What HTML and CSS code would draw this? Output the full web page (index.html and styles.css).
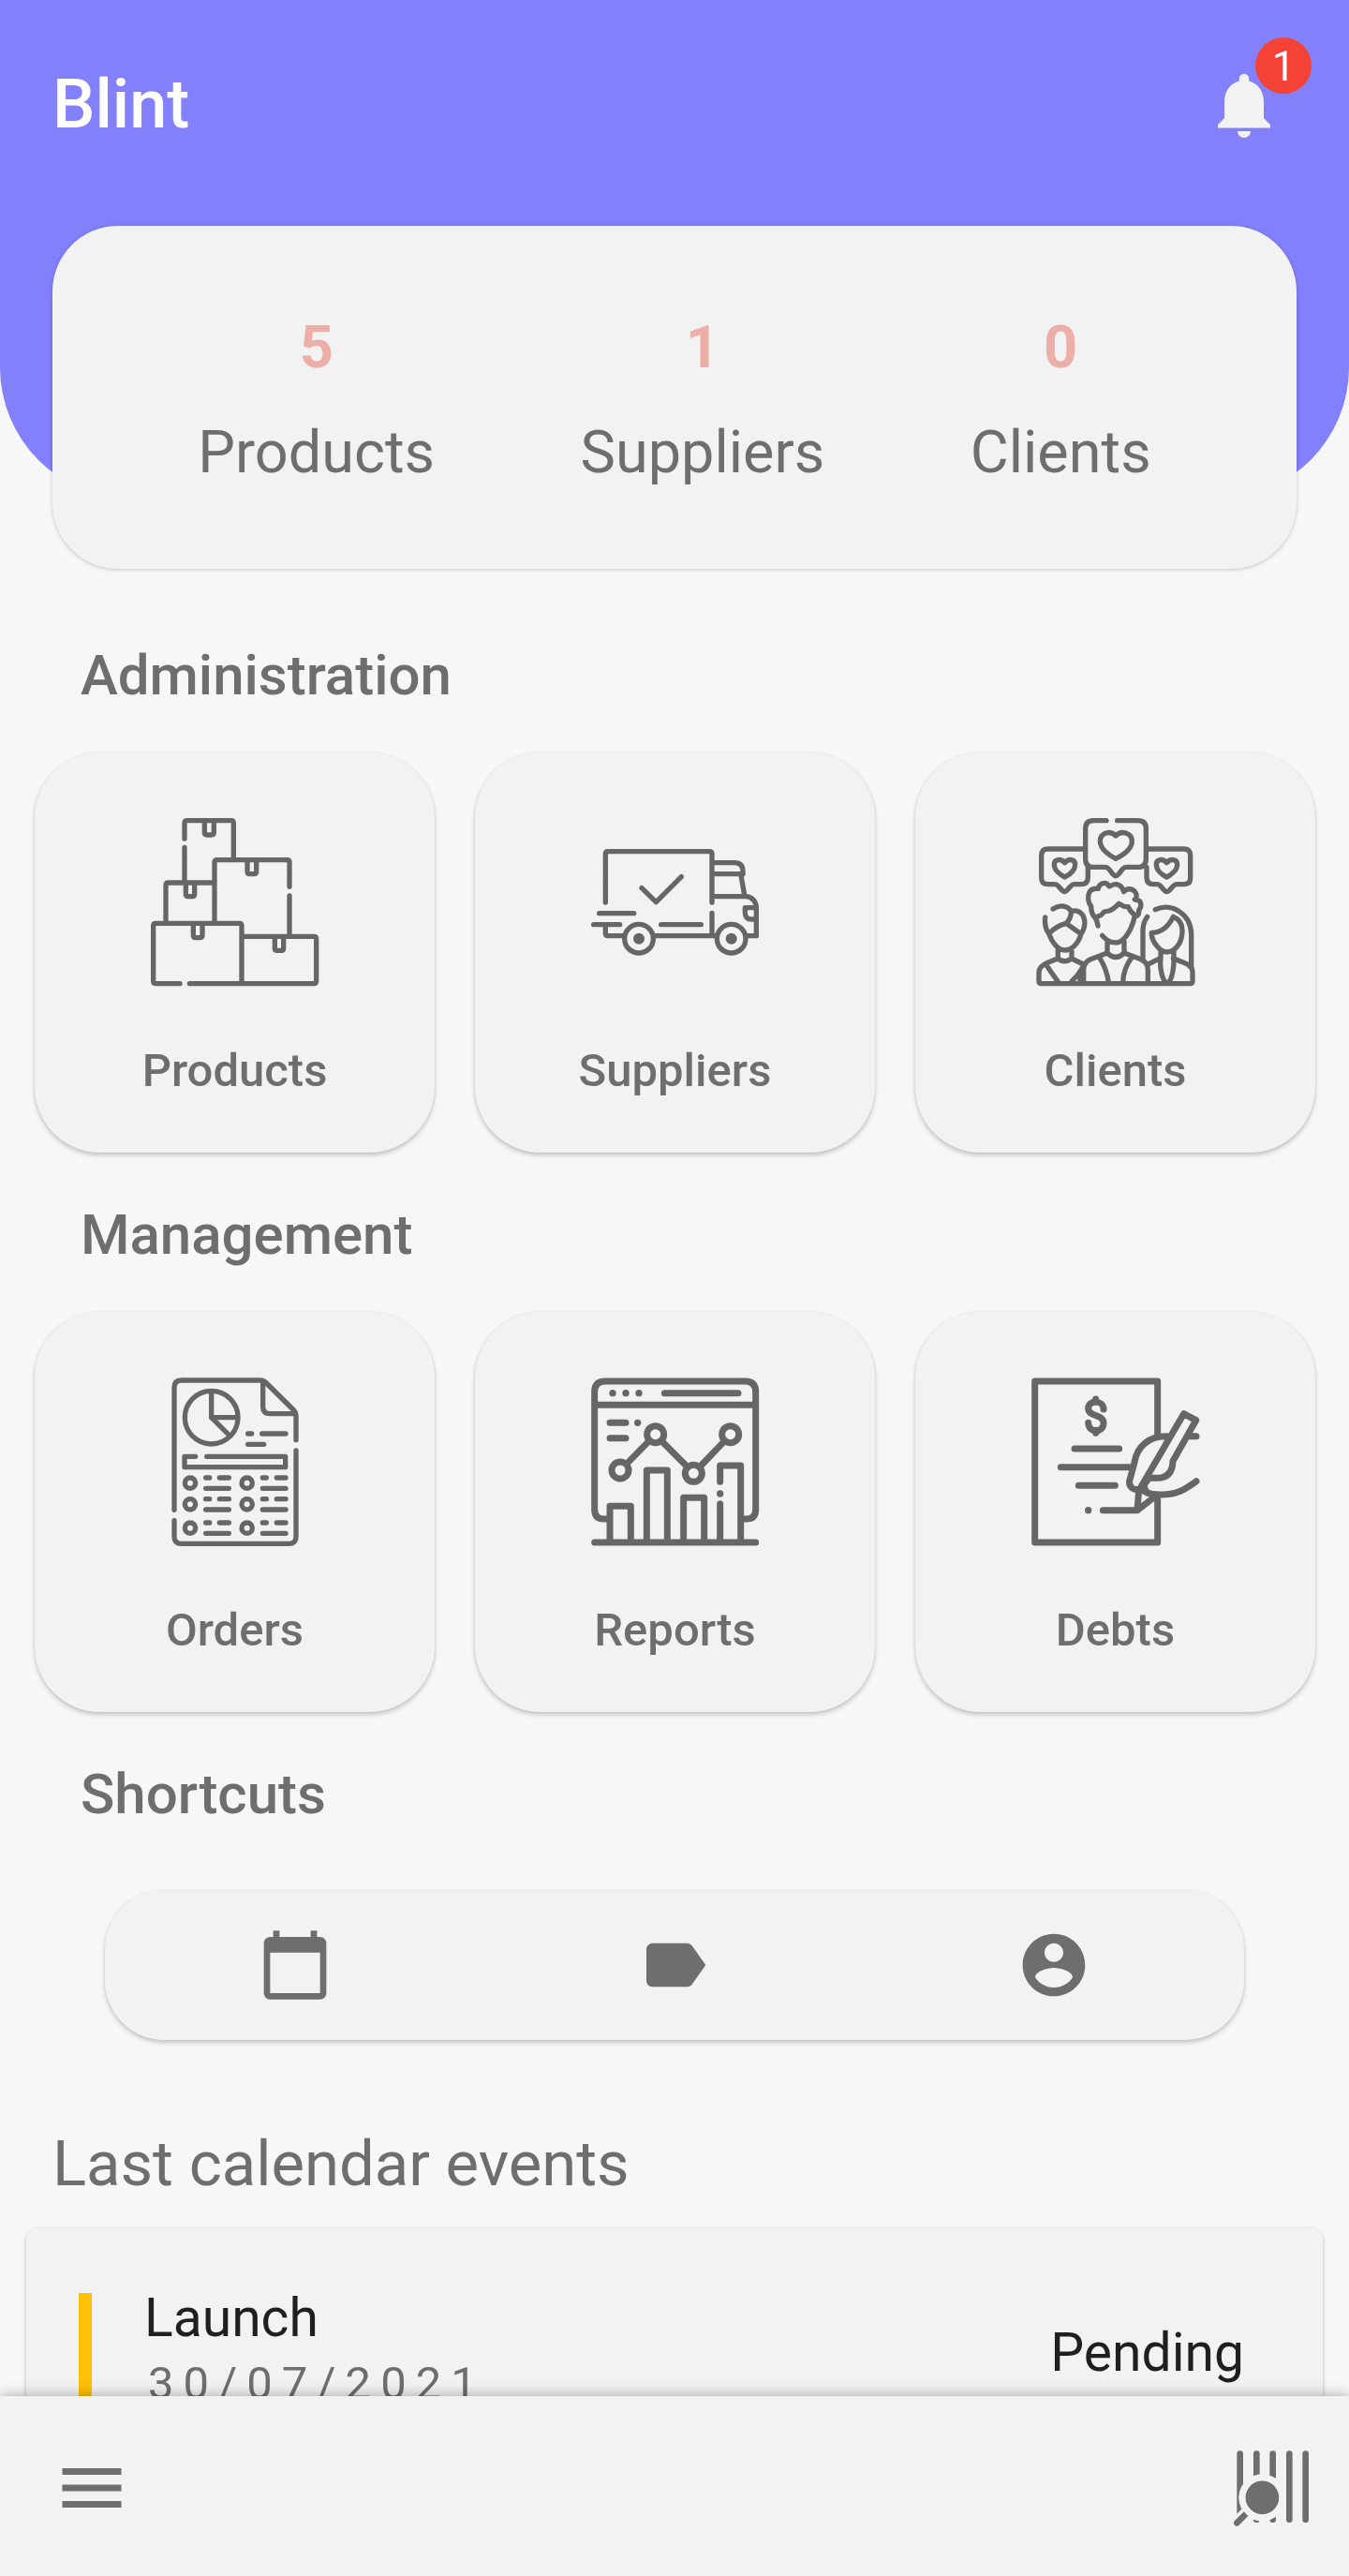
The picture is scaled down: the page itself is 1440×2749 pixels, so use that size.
FILE: index.html
```html
<!DOCTYPE html>
<html lang="en">
<head>
<meta charset="utf-8">
<meta name="viewport" content="width=device-width, initial-scale=1">
<title>Blint</title>
<link rel="stylesheet" href="styles.css">
</head>
<body>
<div class="app">
  <main class="content">
    <header class="hero">
      <div class="topbar">
        <h1 class="brand">Blint</h1>
        <button class="icon-button bell" type="button" aria-label="Notifications">
          <svg class="bell-icon" viewBox="0 0 24 24" aria-hidden="true"><path d="M12 22c1.100 0 2-.9 2-2h-4c0 1.100.89 2 2 2zm6-6v-5c0-3.070-1.640-5.640-4.500-6.320V4c0-.83-.67-1.500-1.500-1.500s-1.500.67-1.500 1.500v.68C7.630 5.360 6 7.920 6 11v5l-2 2v1h16v-1l-2-2z"/></svg>
          <span class="badge">1</span>
        </button>
      </div>
    </header>

    <dl class="summary">
      <div class="stat"><dt>Products</dt><dd>5</dd></div>
      <div class="stat"><dt>Suppliers</dt><dd>1</dd></div>
      <div class="stat"><dt>Clients</dt><dd>0</dd></div>
    </dl>

    <section class="section">
      <h2 class="heading">Administration</h2>
      <nav class="tiles" aria-label="Administration">
        <a class="tile" href="#products">
          <svg class="tile-icon" viewBox="60 68 540 540" aria-hidden="true">
            <path d="M168 134V84q0-8 8-8h141q8 0 8 8v115M168 162v110M232 80v34q0 8 8 8h14q8 0 8-8V80M264 398V210q0-8 8-8h224q8 0 8 8v78M504 317v128M369 206v34q0 7 7 7h15q7 0 7-7v-34M108 400V283q0-8 8-8h148M172 279v33q0 7 7 7h14q7 0 7-7v-33M153 598H76q-8 0-8-8V413q0-8 8-8h268q7 0 7 8v185M184 598h398q8 0 8-8V455q0-8-8-8H355M196 409v34q0 8 7 8h14q8 0 8-8v-34M457 451v34q0 7 7 7h14q7 0 7-7v-34"/>
          </svg>
          <span>Products</span>
        </a>
        <a class="tile" href="#suppliers">
          <svg class="tile-icon" viewBox="60 68 540 540" aria-hidden="true">
            <path d="M106 338V183q0-8 8-8h325q8 0 8 8v155M447 372v72M222 292l46 45 81-81M86 373h111M68 409h84M284 409h128M106 412v25q0 8 8 8h52M264 445h197M447 211h73q26 0 26 28v8h-98M540 252l12 67M447 319h108c22 0 34 18 34 36v90h-30M589 355h-36v15q0 22 21 22h15"/>
            <circle cx="213" cy="454" r="46"/><circle cx="509" cy="454" r="46"/>
            <circle class="dot" cx="213" cy="454" r="18"/><circle class="dot" cx="509" cy="454" r="18"/>
          </svg>
          <span>Suppliers</span>
        </a>
        <a class="tile" href="#clients">
          <svg class="tile-icon" viewBox="60 68 540 540" aria-hidden="true">
            <path d="M300 76h-41q-26 0-26 26v97q0 26 26 26h37q7 0 12 6l14 18q8 9 16 0l14-18q5-6 12-6h37q26 0 26-26v-97q0-26-26-26h-66"/>
            <path d="M330 198C314 190 280 169 280 142C280 116 313 105 330 125C347 105 382 116 382 142C382 169 346 190 330 198Z"/>
            <path d="M231 167H113q-21 0-21 21v71q0 21 21 21h22q6 0 11 6l13 14q7 8 14 0l13-14q5-6 11-6h22q22 0 22-22v-32M429 167h119q21 0 21 21v71q0 21-21 21h-23q-6 0-11 6l-13 14q-8 8-15 0l-12-14q-5-6-11-6h-12q-22 0-22-22v-32"/>
            <path d="M167 257C153 250 133 235 133 217C133 198 155 197 167 211C178 197 200 198 200 217C200 235 180 250 167 257ZM493 257C479 250 460 235 460 217C460 198 482 197 493 211C505 197 527 198 527 217C527 235 507 250 493 257Z"/>
            <path d="M273 413C271 404 270 397 265 388C252 377 251 363 251 350C240 337 240 318 245 307C250 294 262 293 274 294C276 280 292 272 303 279Q309 291 315 284C334 274 351 284 356 304C363 293 382 292 391 303C399 313 398 324 391 329C416 329 413 353 404 363C406 380 394 387 389 376Q378 370 370 352L357 351 340 342Q323 360 308 365L293 368Q283 382 268 384"/>
            <path d="M287 444C302 462 316 467 330 467C350 467 378 440 391 382M303 464v37M357 464v37M303 500Q330 526 357 500M303 500l-54 20q-22 9-22 34v43M357 500l54 20q22 9 22 34v43M277 513Q301 550 307 594M382 513Q354 550 353 594"/>
            <path d="M104 386C102 407 106 426 116 438C125 465 144 491 167 491C190 491 212 467 219 438C231 424 236 393 222 376C213 365 198 362 187 367C177 348 151 344 129 359M187 367Q188 388 171 405Q141 413 118 436M171 405l48 34M145 491v27M189 491v27M144 518Q166 534 189 518M144 518l-32 13q-28 12-28 31v28q0 8 8 8h476q8 0 8-8v-29q0-19-28-30l-34-14M189 518l37 18M106 536q18 27 39 56M224 546q-14 26-35 45M216 570v24"/>
            <path d="M431 384Q417 402 417 429v95M457 361C510 336 572 377 572 441v101M514 384Q490 434 445 435C443 459 470 497 493 497C520 497 542 468 543 432Q545 397 514 384ZM474 494v22l-38 19M516 494v22M474 516C470 545 478 582 490 594M516 516C517 548 510 582 500 594"/>
          </svg>
          <span>Clients</span>
        </a>
      </nav>
    </section>

    <section class="section">
      <h2 class="heading">Management</h2>
      <nav class="tiles" aria-label="Management">
        <a class="tile" href="#orders">
          <svg class="tile-icon" viewBox="0 58 540 540" aria-hidden="true">
            <path d="M75 482V90q0-23 23-23h254q9 0 15 6l91 90q7 7 7 16v79M465 292v275q0 23-23 23H98q-23 0-23-23v-51M359 72v80q0 22 22 22h80"/>
            <circle cx="194" cy="186" r="85"/>
            <path d="M194 103v83h84M194 186l57 57M311 238h12M356 238h76M311 272h51M143 311h-35v34h323v-34H179"/>
            <g id="order-row">
              <circle cx="126" cy="396" r="17"/><circle cx="308" cy="396" r="17"/>
              <path d="M176 379h12M220 379h30M176 413h74M358 379h12M403 379h29M358 413h74"/>
            </g>
            <use href="#order-row" y="68"/>
            <use href="#order-row" y="144"/>
          </svg>
          <span>Orders</span>
        </a>
        <a class="tile" href="#reports">
          <svg class="tile-icon bold" viewBox="60 58 540 540" aria-hidden="true">
            <path d="M116 511h-14q-31 0-31-31V104q0-34 34-34h448q34 0 34 34v376q0 31-31 31h-14M76 146h506M295 108h236M120 203h51M120 252h51M71 586h516M120 582V470h67v112M238 582V355h66v227M356 582V443h66v139M473 392v-52h66v242M473 462v120M179 329l61-62M290 266l74 74M412 340l70-73"/>
            <circle cx="153" cy="355" r="27"/><circle cx="266" cy="240" r="27"/><circle cx="388" cy="365" r="27"/><circle cx="506" cy="240" r="27"/>
            <circle class="dot" cx="129" cy="108" r="11"/><circle class="dot" cx="171" cy="108" r="11"/><circle class="dot" cx="213" cy="108" r="11"/><circle class="dot" cx="209" cy="203" r="11"/><circle class="dot" cx="473" cy="430" r="11"/>
          </svg>
          <span>Reports</span>
        </a>
        <a class="tile" href="#debts">
          <svg class="tile-icon bold" viewBox="60 58 540 540" aria-hidden="true">
            <path d="M464 242V70H71v516h393V440M266 127v10M266 227v9M291 160C291 128 242 130 242 157C242 186 291 173 291 204C291 237 242 237 242 203M198 286h143M154 345h224M211 404h117M289 483h110l54-42M399 483l5-64"/>
            <path d="M500 247C439 242 398 279 390 330L374 389C371 411 390 420 407 415L548 174 587 195 513 326M567 246h21M513 326Q511 381 460 380H441M410 414C433 434 460 434 492 432C533 430 563 409 588 390M431 388Q411 405 432 428"/>
            <circle class="dot" cx="242" cy="483" r="11"/>
          </svg>
          <span>Debts</span>
        </a>
      </nav>
    </section>

    <section class="section">
      <h2 class="heading">Shortcuts</h2>
      <nav class="shortcuts" aria-label="Shortcuts">
        <a href="#calendar" aria-label="Calendar"><svg class="shortcut-icon" viewBox="0 0 24 24" aria-hidden="true"><path d="M20 3h-1V1h-2v2H7V1H5v2H4c-1.100 0-2 .9-2 2v16c0 1.100.9 2 2 2h16c1.100 0 2-.9 2-2V5c0-1.100-.9-2-2-2zm0 18H4V8h16v13z"/></svg></a>
        <a href="#labels" aria-label="Labels"><svg class="shortcut-icon" viewBox="0 0 24 24" aria-hidden="true"><path d="M17.630 5.840C17.270 5.330 16.670 5 16 5L5 5.010C3.900 5.010 3 5.900 3 7v10c0 1.100.9 1.990 2 1.990L16 19c.67 0 1.270-.33 1.630-.84L22 12l-4.370-6.160z"/></svg></a>
        <a href="#account" aria-label="Account"><svg class="shortcut-icon" viewBox="0 0 24 24" aria-hidden="true"><path d="M12 2C6.480 2 2 6.480 2 12s4.480 10 10 10 10-4.480 10-10S17.520 2 12 2zm0 3c1.660 0 3 1.340 3 3s-1.340 3-3 3-3-1.340-3-3 1.340-3 3-3zm0 14.200c-2.500 0-4.710-1.280-6-3.220.03-1.990 4-3.080 6-3.080 1.990 0 5.970 1.090 6 3.080-1.290 1.940-3.500 3.220-6 3.220z"/></svg></a>
      </nav>
    </section>

    <section class="events">
      <h2 class="events-heading">Last calendar events</h2>
      <article class="event">
        <div class="event-info">
          <h3 class="event-title">Launch</h3>
          <time class="event-date" datetime="2021-07-30">30/07/2021</time>
        </div>
        <span class="event-status">Pending</span>
      </article>
    </section>
  </main>

  <footer class="bottombar">
    <button class="icon-button" type="button" aria-label="Menu">
      <svg class="menu-icon" viewBox="0 0 24 24" aria-hidden="true"><path d="M3 18h18v-2H3v2zm0-5h18v-2H3v2zm0-7v2h18V6H3z"/></svg>
    </button>
    <button class="icon-button" type="button" aria-label="Scan barcode">
      <svg class="scan-icon" viewBox="168 160 243 249" aria-hidden="true">
        <path class="bars" d="M188 174v200M241 174v210M293 174v210M346 174v210M398 174v210"/>
        <path class="cutout" d="M240 334l-66 66"/>
        <circle class="halo" cx="259" cy="314" r="75"/>
        <circle cx="259" cy="314" r="54"/>
        <path class="bars" d="M206 367l-28 28"/>
        <path class="cutout ring" d="M259 250a64 64 0 1 0 1 0"/>
      </svg>
    </button>
  </footer>
</div>
</body>
</html>
```
FILE: styles.css
```css
:root {
  --accent: #8280fb;
  --surface: #f2f2f2;
  --page: #f7f7f7;
  --muted: #6e6e6e;
  --ink: #1f1f1f;
  --shadow: 0 3px 5px rgba(0, 0, 0, 0.2), 0 0 3px rgba(0, 0, 0, 0.07);
}

* {
  box-sizing: border-box;
}

body {
  margin: 0;
  background: var(--page);
  color: var(--muted);
  font-family: Roboto, "Noto Sans", sans-serif;
}

h1, h2, h3, dl, dd {
  margin: 0;
}

a {
  color: inherit;
  text-decoration: none;
}

svg {
  display: block;
  fill: currentColor;
}

.app {
  display: flex;
  flex-direction: column;
  height: 100vh;
}

.content {
  flex: 1;
  min-height: 0;
  overflow-y: auto;
  scrollbar-width: none;
}

.icon-button {
  padding: 0;
  border: 0;
  background: none;
  color: inherit;
  font: inherit;
}

/* Header */
.hero {
  height: 532px;
  padding: 58px 70px 0 56px;
  border-radius: 0 0 140px 140px;
  background: var(--accent);
}

.topbar {
  display: flex;
  align-items: center;
  justify-content: space-between;
}

.brand {
  color: #fff;
  font-size: 72px;
  font-weight: 500;
  line-height: 108px;
}

.bell {
  position: relative;
  color: var(--surface);
}

.bell-icon {
  width: 84px;
  height: 84px;
}

.badge {
  position: absolute;
  top: -30px;
  right: -30px;
  width: 60px;
  height: 60px;
  border-radius: 50%;
  background: #f44336;
  color: #fff;
  font-size: 44px;
  line-height: 62px;
  text-align: center;
}

.summary {
  display: flex;
  justify-content: space-evenly;
  margin: -291px 56px 0;
  padding: 93px 0 87px;
  border-radius: 70px;
  background: var(--surface);
  box-shadow: 0 1px 4px rgba(0, 0, 0, 0.2);
  font-size: 63px;
}

.stat {
  display: flex;
  flex-direction: column-reverse;
  gap: 38px;
  text-align: center;
  line-height: 74px;
}

.stat dd {
  color: #ecaea6;
  font-weight: 700;
}

/* Sections */
.heading {
  padding: 76px 86px 44px;
  font-size: 60px;
  font-weight: 500;
  line-height: 76px;
}

.section + .section .heading {
  padding: 50px 86px 44px;
}

.tiles {
  display: grid;
  grid-template-columns: repeat(3, 1fr);
  gap: 43px;
  padding: 0 36px 0 37px;
}

.tile {
  display: flex;
  flex-direction: column;
  align-items: center;
  gap: 61px;
  padding: 70px 0 58px;
  border-radius: 70px;
  background: var(--surface);
  box-shadow: var(--shadow);
  font-size: 49px;
  font-weight: 500;
  line-height: 58px;
}

.tile-icon {
  width: 180px;
  height: 180px;
  fill: none;
  stroke: #666;
  stroke-width: 16;
  stroke-linecap: round;
  stroke-linejoin: round;
}

.tile-icon.bold {
  stroke-width: 21;
}

.tile-icon .dot {
  fill: #666;
  stroke: none;
}

.shortcuts {
  display: flex;
  justify-content: space-around;
  margin: 20px 112px 0;
  padding: 40px 0;
  border-radius: 63px;
  background: var(--surface);
  box-shadow: var(--shadow);
}

.shortcut-icon {
  width: 80px;
  height: 80px;
}

/* Calendar events */
.events {
  padding: 90px 28px 28px;
}

.events-heading {
  padding: 0 28px 26px;
  font-size: 67px;
  font-weight: 400;
  line-height: 84px;
}

.event {
  display: flex;
  align-items: center;
  justify-content: space-between;
  padding: 70px 84px 70px 56px;
  border-radius: 14px;
  background: var(--surface);
  box-shadow: var(--shadow);
  color: var(--ink);
  font-size: 57px;
}

.event-info {
  display: flex;
  flex-direction: column;
  gap: 14px;
  padding-left: 56px;
  border-left: 14px solid #ffc107;
}

.event-title {
  font-size: 57px;
  font-weight: 400;
  line-height: 54px;
}

.event-date {
  padding-left: 4px;
  color: var(--muted);
  font-size: 49px;
  letter-spacing: 10px;
  line-height: 58px;
}

/* Bottom bar */
.bottombar {
  position: relative;
  display: flex;
  align-items: center;
  justify-content: space-between;
  height: 192px;
  padding: 4px 42px 0 56px;
  background: var(--surface);
  box-shadow: 0 0 14px rgba(0, 0, 0, 0.35);
}

.menu-icon {
  width: 84px;
  height: 84px;
}

.scan-icon {
  width: 81px;
  height: 83px;
}

.bars {
  stroke: currentColor;
  stroke-width: 20;
  stroke-linecap: round;
}

.cutout {
  fill: none;
  stroke: var(--surface);
  stroke-width: 42;
}

.cutout.ring {
  stroke-width: 20;
}

.halo {
  fill: var(--surface);
}
```
